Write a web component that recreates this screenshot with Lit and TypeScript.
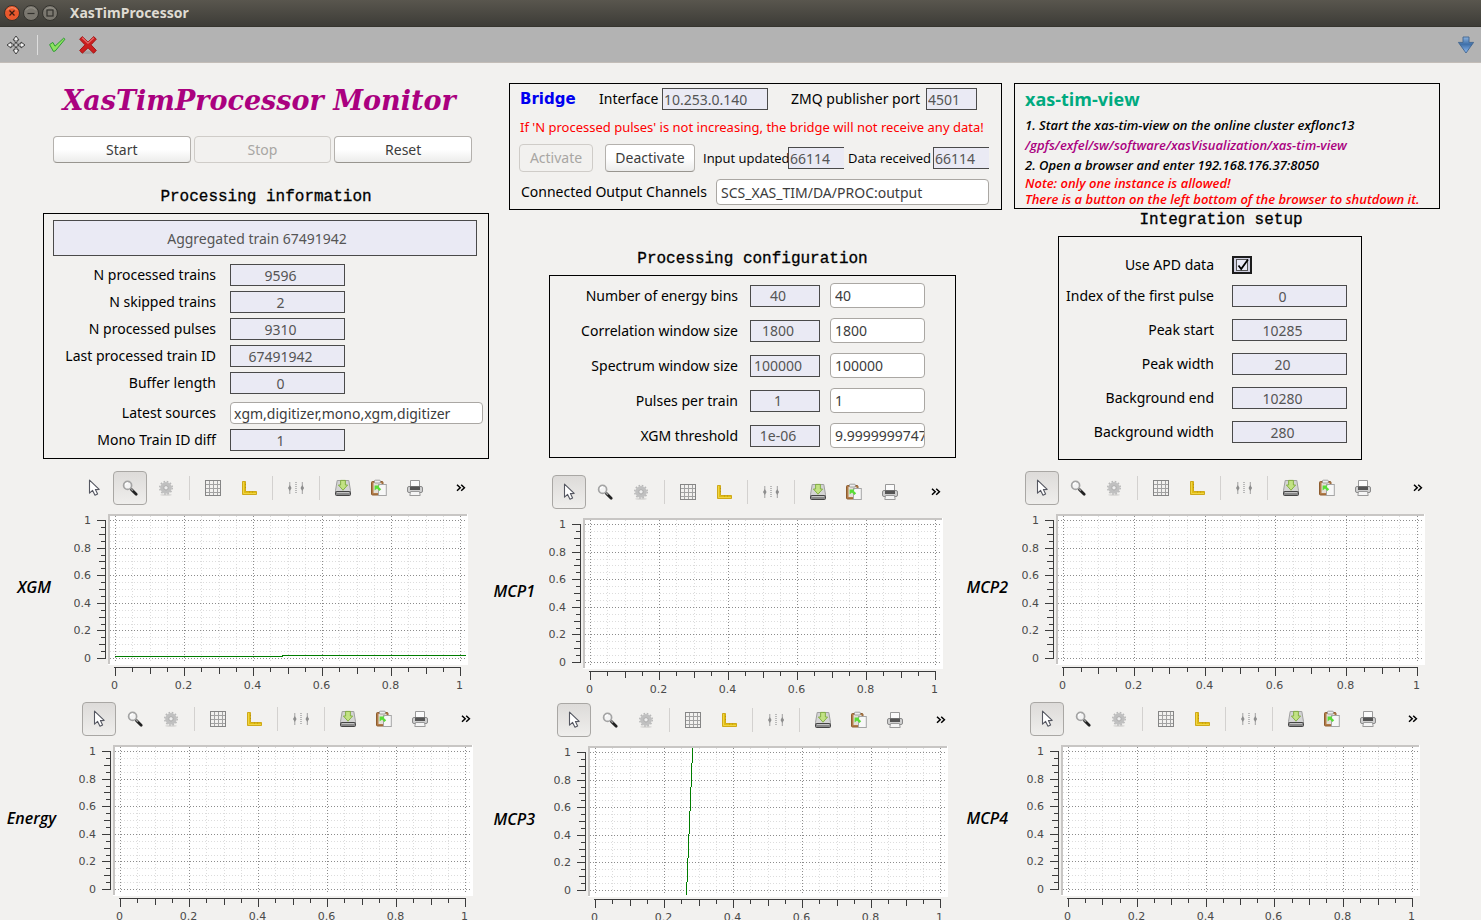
import { LitElement, html, svg, css, nothing, TemplateResult } from "lit";
import { customElement, property, state } from "lit/decorators.js";
import { classMap } from "lit/directives/class-map.js";

type Point = [number, number];

const icons: Record<string, TemplateResult> = {
  pointer: html`<svg width="18" height="18" viewBox="0 0 18 18"><path d="M4.5 1.2 L4.5 14.2 L7.6 11.4 L10 16.3 L12.6 15.1 L10.4 10.6 L14.2 10.4 Z" fill="#fff" stroke="#555761" stroke-width="1.1" stroke-linejoin="round"/></svg>`,
  zoom: html`<svg width="18" height="18" viewBox="0 0 18 18"><path d="M10.4 10.4 L15.2 15.2" stroke="#222" stroke-width="2.8" stroke-linecap="round"/><path d="M9.4 9.2 L12 11.8" stroke="#999" stroke-width="1.4"/><circle cx="6.6" cy="6.4" r="4" fill="#f4f4f4" stroke="#a4a4a4" stroke-width="1.7"/><path d="M4.4 6 A2.4 2.4 0 0 1 7 3.9" fill="none" stroke="#fff" stroke-width="1.2"/></svg>`,
  gear: html`<svg width="18" height="18" viewBox="0 0 18 18"><ellipse cx="9" cy="15.8" rx="6" ry="1.2" fill="#dcdbd9"/><circle cx="9" cy="8.8" r="6.2" fill="none" stroke="#b8b8b8" stroke-width="1.6" stroke-dasharray="1.6 1.646"/><circle cx="9" cy="8.8" r="4" fill="none" stroke="#c0c0c0" stroke-width="3.6"/><circle cx="9" cy="8.8" r="2.2" fill="#ededed" stroke="#a9a9a9"/></svg>`,
  grid: html`<svg width="18" height="18" viewBox="0 0 18 18" shape-rendering="crispEdges"><path d="M5.5 1V17M9.5 1V17M13.5 1V17M1 5.5H17M1 9.5H17M1 13.5H17" stroke="#a2a2a2" fill="none"/><rect x="1.5" y="1.5" width="15" height="15" fill="none" stroke="#858585"/></svg>`,
  ruler: html`<svg width="18" height="18" viewBox="0 0 18 18"><path d="M2.5 2.5H5.5V12.5H16.5V15.5H2.5Z" fill="#e3be10" stroke="#cfa91a"/><path d="M3.5 3V14.5H16" fill="none" stroke="#efd544"/><path d="M5 5.5H6M5 8.5H6M9.5 12.5V13.5M12.5 12.5V13.5" stroke="#b08d0c" stroke-width=".8"/></svg>`,
  cursors: html`<svg width="18" height="18" viewBox="0 0 18 18"><path d="M2.8 3V15M15.3 3V15" stroke="#a0a0a0"/><path d="M2.8 6L4.6 9L2.8 12L1 9ZM15.3 6L17.1 9L15.3 12L13.5 9Z" fill="#8e8e8e"/><path d="M9 3V15" stroke="#b9b9b9" stroke-width="2" stroke-dasharray="1 1"/></svg>`,
  save: html`<svg width="18" height="18" viewBox="0 0 18 18"><path d="M3.2 1.5H14.8L16.5 11.5V13H1.5V11.5Z" fill="#d4d4d4" stroke="#a0a0a0"/><rect x="1.5" y="12.5" width="15" height="4" rx="1" fill="#8a8a8a" stroke="#444"/><path d="M3 13.5H15" stroke="#c4c4c4"/><path d="M6.6 1.4H11.4V6H13.6L9 11.2L4.4 6H6.6Z" fill="#c2e283" stroke="#7dab3a" stroke-width=".9" stroke-linejoin="round"/></svg>`,
  paste: html`<svg width="18" height="18" viewBox="0 0 18 18"><rect x="1.5" y="2.5" width="11.5" height="13.5" rx="1" fill="#b27c48" stroke="#8d5c2e"/><rect x="3.5" y="4" width="8" height="10" fill="#e4dfd8"/><rect x="4.4" y="1.2" width="6" height="2.8" rx="1" fill="#eee" stroke="#8d8d8d" stroke-width=".8"/><rect x="8.5" y="5.5" width="7.8" height="11" fill="#f7f7f7" stroke="#a5a5a5"/><path d="M4.6 6.4H9.8L8.6 7.8L11.2 10.2L9.4 12L7 9.6L4.6 11.4Z" fill="#58dd36"/></svg>`,
  print: html`<svg width="18" height="18" viewBox="0 0 18 18"><path d="M4.5 8V1.5H13.5V8" fill="#fbfbfb" stroke="#999"/><rect x="1.5" y="7.5" width="15" height="6" rx="1.5" fill="#cfcfcf" stroke="#8a8a8a"/><rect x="4" y="7.5" width="10" height="3.5" fill="#555"/><path d="M4.5 12.5H13.5L14.2 16.5H3.8Z" fill="#f5f5f5" stroke="#9a9a9a"/></svg>`,
  more: html`<svg width="10" height="8" viewBox="0 0 10 8"><path d="M1 .8L4.2 3.8L1 6.8M5.2 .8L8.4 3.8L5.2 6.8" fill="none" stroke="#000" stroke-width="1.5"/></svg>`,
  move: html`<svg width="20" height="20" viewBox="0 0 20 20"><g fill="#f2f2f2" stroke="#3f3f3f" stroke-width="1" stroke-linejoin="round"><path d="M10 1L13 5L11 5.2V7.4H9V5.2L7 5Z"/><path d="M10 19L13 15L11 14.8V12.6H9V14.8L7 15Z"/><path d="M1 10L5 7L5.2 9H7.4V11H5.2L5 13Z"/><path d="M19 10L15 7L14.8 9H12.6V11H14.8L15 13Z"/></g><rect x="8.7" y="8.7" width="2.6" height="2.6" fill="#ddd" stroke="#555" stroke-width=".8"/></svg>`,
  accept: html`<svg width="18" height="18" viewBox="0 0 18 18"><path d="M1.6 8.6L4.8 6.4L7 10.2L15.6 2.2L17 3.2L7.2 15L5.4 15.4Z" fill="#8de25f" stroke="#2e9a34" stroke-linejoin="round"/></svg>`,
  cancel: html`<svg width="20" height="20" viewBox="0 0 20 20"><ellipse cx="10" cy="17.6" rx="8" ry="1.4" fill="#a2a2a2"/><path d="M4.2 1.6L10 7L15.8 1.6L18.3 4.2L13 9.8L18.3 15.4L15.6 18.2L10 12.8L4.4 18.2L1.7 15.4L7 9.8L1.7 4.2Z" fill="#cb1f1f" stroke="#a51515" stroke-linejoin="round"/><path d="M4.2 2.8L10 8.2L15.8 2.8" fill="none" stroke="#e56a6a" stroke-width="1.2"/></svg>`,
  down: html`<svg width="18" height="20" viewBox="0 0 18 20"><defs><linearGradient id="dn" x1="0" y1="0" x2="0" y2="1"><stop offset="0" stop-color="#8db4e0"/><stop offset=".45" stop-color="#3f6fa8"/><stop offset="1" stop-color="#8fbcf4"/></linearGradient></defs><path d="M6 2H12V7.4H16.6L9 18L1.4 7.4H6Z" fill="url(#dn)" stroke="#42658f" stroke-width=".9" stroke-linejoin="round"/></svg>`,
};

const toolGroups: [string, string][][] = [
  [["pointer", "Select"], ["zoom", "Zoom"], ["gear", "Settings"]],
  [["grid", "Grid"], ["ruler", "Axes"]],
  [["cursors", "Cursors"]],
  [["save", "Save"], ["paste", "Copy"], ["print", "Print"]],
];

@customElement("xas-plot")
export class XasPlot extends LitElement {
  @property() name = "";
  @property() tool = "pointer";
  @property({ attribute: false }) series: Point[] = [];
  @state() private w = 394;
  private observer?: ResizeObserver;

  static styles = css`
    :host { display: grid; grid-template-columns: 74px minmax(0, 1fr); }
    .name {
      display: flex; align-items: center; justify-content: flex-end; margin: 0;
      padding: 8px var(--name-gap, 19px) 0 0; white-space: nowrap;
      font: italic 600 16px/20px "Open Sans", sans-serif; color: #000;
    }
    .tools { display: flex; align-items: center; gap: 2px; padding: 0 3px; margin-bottom: 4px; }
    button {
      width: 34px; height: 34px; padding: 0; display: grid; place-items: center;
      border: 1px solid transparent; border-radius: 4px; background: none;
    }
    button.on { border-color: #a9a7a4; background: linear-gradient(#dddbd9, #efeeec); }
    .sep { width: 9px; height: 24px; display: flex; justify-content: center; }
    .sep::before { content: ""; width: 1px; background: #d3d1cf; }
    .more { margin-left: auto; width: 10px; }
    .plot { display: block; width: 100%; height: 186px; overflow: hidden; }
    text { font: 11px "DejaVu Sans", sans-serif; fill: #4a4a4a; }
    .end { text-anchor: end; }
    .mid { text-anchor: middle; }
    .axis { stroke: #3c3c3c; }
    .major { stroke: #8c8c8c; stroke-dasharray: 1 2; }
    .minor { stroke: #dcdcdc; stroke-dasharray: 1 2; }
    .line { fill: none; stroke: #007d00; }
  `;

  firstUpdated() {
    const area = this.renderRoot.querySelector(".area") as HTMLElement;
    this.w = Math.round(area.clientWidth) || this.w;
    this.observer = new ResizeObserver(() => { this.w = Math.round(area.clientWidth) || this.w; });
    this.observer.observe(area);
  }

  disconnectedCallback() {
    super.disconnectedCallback();
    this.observer?.disconnect();
  }

  private chart() {
    const w = this.w;
    const px = (v: number) => Math.round(41 + v * (w - 49)) + 0.5;
    const py = (v: number) => Math.round(149 - v * 138) + 0.5;
    const steps = Array.from({ length: 21 }, (_, i) => i);
    const isMajor = (i: number) => i % 4 === 0;
    const reach = (i: number) => (isMajor(i) ? 8 : i % 2 === 0 ? 6 : 4);
    const gridLines = (major: boolean) => steps.filter((i) => isMajor(i) === major).map((i) => svg`
      <line class=${major ? "major" : "minor"} x1=${px(i / 20)} x2=${px(i / 20)} y1="7" y2="154"></line>
      <line class=${major ? "major" : "minor"} y1=${py(i / 20)} y2=${py(i / 20)} x1="36" x2=${w - 2}></line>`);
    return html`<svg class="plot" viewBox="0 0 ${w} 186" role="img" aria-label=${this.name}>
      <g shape-rendering="crispEdges">
        <rect x="34" y="5" width=${w - 34} height="151" fill="#fff"></rect>
        <path d="M34 5H${w - 1}V7H36V155H34Z" fill="#c8c6c4"></path>
        ${gridLines(false)} ${gridLines(true)}
        <line class="axis" x1="31.5" x2="31.5" y1="11" y2="150"></line>
        <line class="axis" x1="40" x2=${w - 7} y1="158.5" y2="158.5"></line>
        ${steps.map((i) => svg`
          <line class="axis" x1=${31 - reach(i)} x2="31" y1=${py(i / 20)} y2=${py(i / 20)}></line>
          <line class="axis" x1=${px(i / 20)} x2=${px(i / 20)} y1="159" y2=${159 + reach(i)}></line>`)}
        ${this.series.length ? svg`<polyline class="line" points=${this.series.map(([x, y]) => `${41 + x * (w - 49)},${py(y)}`).join(" ")}></polyline>` : nothing}
      </g>
      ${steps.filter(isMajor).map((i) => svg`
        <text class="end" x="17" y=${py(i / 20) + 3.5}>${i / 20}</text>
        <text class="mid" x=${px(i / 20) - 1} y="180">${i / 20}</text>`)}
    </svg>`;
  }

  render() {
    return html`
      <h3 class="name">${this.name}</h3>
      <div class="area">
        <div class="tools">
          ${toolGroups.map((group, g) => html`
            ${g ? html`<span class="sep"></span>` : nothing}
            ${group.map(([id, label]) => html`<button class=${classMap({ on: id === this.tool })} aria-label=${label}
              @click=${() => (this.tool = id)}>${icons[id]}</button>`)}`)}
          <button class="more" aria-label="More tools">${icons.more}</button>
        </div>
        ${this.chart()}
      </div>`;
  }
}

const info = [
  ["N processed trains", "9596"],
  ["N skipped trains", "2"],
  ["N processed pulses", "9310"],
  ["Last processed train ID", "67491942"],
  ["Buffer length", "0"],
  ["Latest sources", "xgm,digitizer,mono,xgm,digitizer"],
  ["Mono Train ID diff", "1"],
];

const config = [
  ["Number of energy bins", "40", "40"],
  ["Correlation window size", "1800", "1800"],
  ["Spectrum window size", "100000", "100000"],
  ["Pulses per train", "1", "1"],
  ["XGM threshold", "1e-06", "9.99999997475e-07"],
];

const integration = [
  ["Index of the first pulse", "0"],
  ["Peak start", "10285"],
  ["Peak width", "20"],
  ["Background end", "10280"],
  ["Background width", "280"],
];

@customElement("app-root")
export class AppRoot extends LitElement {
  static styles = css`
    :host {
      display: block; height: 100vh; overflow: hidden; background: #f2f1ef; color: #000;
      font: 14px/20px "Noto Sans", "Open Sans", sans-serif;
    }
    * { box-sizing: border-box; }
    h1, h2, p { margin: 0; }
    .titlebar {
      display: flex; align-items: center; gap: 3px; height: 27px; padding: 0 4px 1px;
      background: linear-gradient(#59564e, #3d3c37); border-bottom: 1px solid #36352f;
    }
    .titlebar h1 { margin-left: 9px; font: 700 14px/20px "Noto Sans", sans-serif; color: #dfdbd2; }
    .win { width: 16px; height: 16px; padding: 0; border: 0; background: none; display: block; }
    .win svg { display: block; }
    .actions {
      display: flex; align-items: center; height: 36px; padding: 0 6px; background: #b3b3b3;
      border-bottom: 1px solid #c3bdb8;
    }
    .icon { padding: 0; border: 0; background: none; display: grid; place-items: center; height: 24px; }
    .divider { width: 1px; height: 20px; background: #dedede; margin: 0 10px 0 11px; }
    .icon + .icon { margin-left: 12px; }
    .spring { flex: 1; }

    .top {
      display: grid; grid-template-columns: 454fr 493fr 426fr; column-gap: 12px;
      align-items: start; padding: 20px 41px 0 43px;
    }
    .col { min-width: 0; }
    .first { padding-right: 8px; }
    .brand { font: italic 700 27px/36px "DejaVu Serif", serif; color: #aa007f; text-align: center; padding-right: 14px; }
    .panel { border: 1px solid #000; }
    .caption { font: 400 16px/20px "Liberation Mono", monospace; -webkit-text-stroke: 0.3px #000; text-align: center; margin-bottom: 6px; }

    .btn {
      font: inherit; color: #3c3c3c; height: 27px; padding: 0 8px; border: 1px solid #b4b1ad; border-bottom-color: #98958f;
      border-radius: 4px; background: linear-gradient(#fff 50%, #ececeb);
    }
    .btn:disabled { color: #a8a6a3; background: #f2f1ef; border-color: #cfccc8; }
    .run { display: grid; grid-template-columns: 1fr 1fr 1fr; gap: 3px; padding: 17px 17px 0 10px; margin-bottom: 24px; }

    input { font: inherit; min-width: 0; margin: 0; outline: 0; border-radius: 0; }
    .ro { height: 22px; width: 100%; background: #eaeaf4; border: 1px solid #4a4a4a; color: #555; padding: 0 14px 0 0; text-align: center; }
    .ro.left { text-align: left; padding: 0 0 0 1px; }
    .ro.cut { border-right: 0; }
    .edit { height: 25px; width: 100%; background: #fff; border: 1px solid #aaa7a3; border-radius: 4px; color: #3c3c3c; padding: 0 0 0 4px; }
    .edit.slim { height: 22px; padding-left: 3px; }
    label { white-space: nowrap; }

    .info { padding: 6px 5px 7px 9px; }
    .info .status { height: 36px; margin-bottom: 8px; padding-right: 16px; }
    .rows { display: grid; gap: 5px; }
    .row { display: grid; grid-template-columns: 163px 115px; column-gap: 14px; align-items: center; }
    .row label { text-align: right; }
    .row.wide { grid-template-columns: 163px minmax(0, 1fr); padding-top: 3px; }
    .status-wrap { padding-right: 6px; }

    .bridge { display: grid; gap: 7px; padding: 4px 12px 4px 9px; }
    .line { display: flex; align-items: center; }
    .bridge h2 { font: 700 15px/22px "DejaVu Sans", sans-serif; color: #0000f0; width: 79px; padding-left: 1px; }
    .bridge .warn { font: 13px/20px "Noto Sans", sans-serif; color: #f00; padding-left: 1px; white-space: nowrap; }
    .bridge .btn { height: 28px; }
    .w-if { width: 64px; padding-left: 1px; }
    .w-zmq { width: 135px; margin-left: 23px; }
    .f-if { width: 106px; }
    .f-zmq { width: 51px; }
    .activate { width: 74px; margin-right: 12px; }
    .deactivate { width: 90px; margin-right: 8px; }
    .small { font: 13px/20px "Open Sans", sans-serif; width: 85px; }
    .f-count { width: 56px; }
    .f-count + .small { margin-left: 4px; }
    .channels label { width: 197px; padding-left: 2px; }
    .channels .edit { flex: 1; width: auto; height: 26px; }

    .mid .caption { margin-top: 39px; padding-right: 6px; }
    .config { margin: 0 46px 0 40px; padding: 7px 30px 9px 8px; display: grid; gap: 10px; }
    .crow { display: grid; grid-template-columns: minmax(0, 1fr) 70px 95px; column-gap: 10px; align-items: center; }
    .crow label { text-align: right; padding-right: 2px; }

    .view { padding: 3px 10px 1px; }
    .view h2 { font: 700 18px/24px "Open Sans", sans-serif; color: #00aa7f; margin-bottom: 4px; }
    .view p { font: italic 600 13px/20px "Open Sans", sans-serif; white-space: nowrap; }
    .view .path { color: #aa007f; }
    .view .note { color: #f00; line-height: 16px; }
    .right .caption { margin-top: 1px; padding-right: 12px; }
    .setup { margin: 0 78px 0 44px; padding: 18px 14px 16px 2px; display: grid; gap: 12px; }
    .srow { display: grid; grid-template-columns: minmax(0, 1fr) 115px; column-gap: 18px; align-items: center; }
    .srow label { text-align: right; display: flex; justify-content: flex-end; }
    .srow.tick { height: 18px; }
    .check { display: grid; width: 20px; }
    .check input { grid-area: 1 / 1; appearance: none; width: 20px; height: 18px; border: 2px solid #1c1c1c; background: #cfcfe0; }
    .check svg { grid-area: 1 / 1; pointer-events: none; visibility: hidden; }
    .check input:checked + svg { visibility: visible; }

    .plots { display: grid; grid-template-columns: 473fr 475fr 477fr; align-items: start; padding: 11px 56px 0 0; }
    .stack { display: grid; gap: 7px; min-width: 0; }
    .stack xas-plot:first-child { padding-right: 5px; }
    .stack xas-plot:last-child { padding-left: 5px; }
    .stack.center { padding: 4px 0 0 2px; gap: 4px; }
    .stack.wide xas-plot:first-child { padding-right: 0; }
    .stack.wide xas-plot:last-child { padding-right: 5px; }
    .near { --name-gap: 14px; }
    .far { --name-gap: 23px; }
  `;

  private ro(id: string, value: string, cls = "") {
    return html`<input class="ro ${cls}" id=${id} readonly .value=${value}>`;
  }

  private winButton(kind: string) {
    const hot = kind === "Close";
    return html`<button class="win" aria-label=${kind}><svg width="16" height="16" viewBox="0 0 16 16">
      <circle cx="8" cy="8" r="7.5" fill=${hot ? "#e9582c" : "#7a776f"} stroke="#34332e"/>
      <path d="M3 5.4A6 6 0 0 1 13 5.4" fill="none" stroke=${hot ? "#f59a78" : "#97948b"}/>
      ${hot ? svg`<path d="M5.5 5.5L10.5 10.5M10.5 5.5L5.5 10.5" stroke="#3b1b10" stroke-width="1.3"/>`
        : kind === "Minimize" ? svg`<path d="M4.5 8.5H11.5" stroke="#33322e" stroke-width="1.2"/>`
        : svg`<rect x="5" y="5" width="6" height="6" fill="none" stroke="#33322e" stroke-width="1.2"/>`}
    </svg></button>`;
  }

  render() {
    return html`
      <header>
        <div class="titlebar">
          ${["Close", "Minimize", "Maximize"].map((k) => this.winButton(k))}
          <h1>XasTimProcessor</h1>
        </div>
        <div class="actions">
          <button class="icon" aria-label="Move">${icons.move}</button>
          <span class="divider"></span>
          <button class="icon" aria-label="Apply all">${icons.accept}</button>
          <button class="icon" aria-label="Decline all">${icons.cancel}</button>
          <span class="spring"></span>
          <button class="icon" aria-label="Dock">${icons.down}</button>
        </div>
      </header>
      <main>
        <div class="top">
          <section class="col first">
            <h1 class="brand">XasTimProcessor Monitor</h1>
            <div class="run">
              <button class="btn">Start</button>
              <button class="btn" disabled>Stop</button>
              <button class="btn">Reset</button>
            </div>
            <h2 class="caption">Processing information</h2>
            <div class="panel info">
              <div class="status-wrap"><input class="ro status" readonly aria-label="Status" .value=${"Aggregated train 67491942"}></div>
              <div class="rows">
                ${info.map(([label, value], i) => {
                  const wide = label === "Latest sources";
                  return html`<div class=${classMap({ row: true, wide })}>
                    <label for="info${i}">${label}</label>
                    ${wide ? html`<input class="edit slim" id="info${i}" .value=${value}>` : this.ro(`info${i}`, value)}
                  </div>`;
                })}
              </div>
            </div>
          </section>

          <section class="col mid">
            <div class="panel bridge">
              <div class="line">
                <h2>Bridge</h2>
                <label class="w-if" for="iface">Interface</label>${this.ro("iface", "10.253.0.140", "left f-if")}
                <label class="w-zmq" for="port">ZMQ publisher port</label>${this.ro("port", "4501", "left f-zmq")}
              </div>
              <p class="warn">If 'N processed pulses' is not increasing, the bridge will not receive any data!</p>
              <div class="line">
                <button class="btn activate" disabled>Activate</button>
                <button class="btn deactivate">Deactivate</button>
                <label class="small" for="inup">Input updated</label>${this.ro("inup", "66114", "left cut f-count")}
                <label class="small" for="recv">Data received</label>${this.ro("recv", "66114", "left cut f-count")}
              </div>
              <div class="line channels">
                <label for="chan">Connected Output Channels</label>
                <input class="edit" id="chan" .value=${"SCS_XAS_TIM/DA/PROC:output"}>
              </div>
            </div>
            <h2 class="caption">Processing configuration</h2>
            <div class="panel config">
              ${config.map(([label, current, next], i) => html`<div class="crow">
                <label for="cfg${i}">${label}</label>
                <input class="ro" readonly aria-label="${label}, current" .value=${current}>
                <input class="edit" id="cfg${i}" .value=${next}>
              </div>`)}
            </div>
          </section>

          <section class="col right">
            <div class="panel view">
              <h2>xas-tim-view</h2>
              <p>1. Start the xas-tim-view on the online cluster exflonc13</p>
              <p class="path">/gpfs/exfel/sw/software/xasVisualization/xas-tim-view</p>
              <p>2. Open a browser and enter 192.168.176.37:8050</p>
              <p class="note">Note: only one instance is allowed!</p>
              <p class="note">There is a button on the left bottom of the browser to shutdown it.</p>
            </div>
            <h2 class="caption">Integration setup</h2>
            <div class="panel setup">
              <div class="srow tick">
                <label for="apd">Use APD data</label>
                <span class="check">
                  <input type="checkbox" id="apd" checked>
                  <svg width="20" height="18" viewBox="0 0 20 18"><rect x="4.5" y="3.5" width="11" height="11" fill="#e9e9f6" stroke="#555"/><path d="M6.5 9.5L9.2 13L16 3.5" fill="none" stroke="#000" stroke-width="1.8"/></svg>
                </span>
              </div>
              ${integration.map(([label, value], i) => html`<div class="srow">
                <label for="int${i}">${label}</label>${this.ro(`int${i}`, value)}
              </div>`)}
            </div>
          </section>
        </div>

        <div class="plots">
          <div class="stack">
            <xas-plot class="far" name="XGM" tool="zoom" .series=${[[0, 0.014], [0.486, 0.014], [0.486, 0.022], [1.017, 0.022]] as Point[]}></xas-plot>
            <xas-plot class="far" name="Energy"></xas-plot>
          </div>
          <div class="stack center">
            <xas-plot class="near" name="MCP1"></xas-plot>
            <xas-plot name="MCP3" .series=${[[0.265, -0.036], [0.283, 1.03]] as Point[]}></xas-plot>
          </div>
          <div class="stack wide">
            <xas-plot class="near" name="MCP2"></xas-plot>
            <xas-plot name="MCP4"></xas-plot>
          </div>
        </div>
      </main>`;
  }
}
